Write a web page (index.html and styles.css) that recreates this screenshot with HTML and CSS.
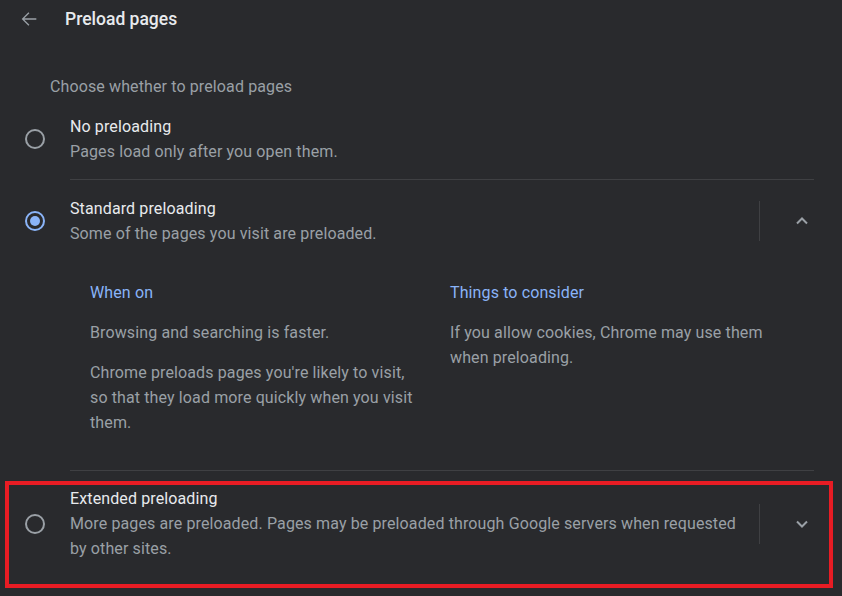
FILE: index.html
```html
<!DOCTYPE html>
<html>
<head>
<meta charset="utf-8">
<link rel="stylesheet" href="styles.css">
</head>
<body>
<div class="page">
  <header class="header">
    <svg class="back" width="22" height="22" viewBox="0 0 24 24"><path d="M20 11.25H6.9l5.55-5.55L11.4 4.65 4.05 12l7.35 7.35 1.05-1.05-5.55-5.55H20z" fill="#9aa0a6"/></svg>
    <h1 class="title">Preload pages</h1>
  </header>
  <div class="intro">Choose whether to preload pages</div>

  <div class="list">
    <div class="row row-first">
      <div class="radio-cell"><span class="radio"></span></div>
      <div class="text">
        <div class="label">No preloading</div>
        <div class="sub">Pages load only after you open them.</div>
      </div>
    </div>
    <div class="sep"></div>
    <div class="row">
      <div class="radio-cell"><span class="radio checked"></span></div>
      <div class="text">
        <div class="label">Standard preloading</div>
        <div class="sub">Some of the pages you visit are preloaded.</div>
      </div>
      <div class="vsep"></div>
      <div class="chev"><svg width="14" height="14" viewBox="0 0 14 14"><path d="M2 9.5 L7 4.5 L12 9.5" fill="none" stroke="#9aa0a6" stroke-width="2"/></svg></div>
    </div>
    <div class="details">
      <div class="col">
        <div class="col-head">When on</div>
        <p>Browsing and searching is faster.</p>
        <p>Chrome preloads pages you're likely to visit, so that they load more quickly when you visit them.</p>
      </div>
      <div class="col">
        <div class="col-head">Things to consider</div>
        <p>If you allow cookies, Chrome may use them when preloading.</p>
      </div>
    </div>
    <div class="sep"></div>
    <div class="row row-last">
      <div class="radio-cell"><span class="radio"></span></div>
      <div class="text">
        <div class="label">Extended preloading</div>
        <div class="sub">More pages are preloaded. Pages may be preloaded through Google servers when requested by other sites.</div>
      </div>
      <div class="vsep"></div>
      <div class="chev"><svg width="14" height="14" viewBox="0 0 14 14"><path d="M2 4.5 L7 9.5 L12 4.5" fill="none" stroke="#9aa0a6" stroke-width="2"/></svg></div>
      <div class="highlight"></div>
    </div>
  </div>
</div>
</body>
</html>
```

FILE: styles.css
```css
html, body {
  margin: 0;
  padding: 0;
  background: #292a2d;
}
body {
  font-family: Roboto, "Liberation Sans", sans-serif;
  font-size: 16px;
  letter-spacing: 0.12px;
  color: #e8eaed;
  width: 842px;
  height: 596px;
  overflow: hidden;
}
.header {
  display: flex;
  align-items: center;
  height: 38px;
  padding-left: 18px;
}
.back {
  display: block;
}
.title {
  margin: 0 0 0 25px;
  font-size: 17.5px;
  font-weight: 500;
  letter-spacing: 0;
  color: #e8eaed;
}
.intro {
  margin-top: 36px;
  padding-left: 50px;
  line-height: 25px;
  color: #9aa0a6;
}
.list {
  padding-right: 28px;
}
.row {
  display: flex;
  align-items: center;
  padding: 16px 0;
  position: relative;
}
.row-first {
  padding-top: 15px;
  padding-bottom: 15px;
}
.row-last {
  padding-top: 15px;
  padding-bottom: 16px;
}
.radio-cell {
  width: 70px;
  display: flex;
  justify-content: center;
  flex: none;
}
.radio {
  width: 16px;
  height: 16px;
  border: 2px solid #9aa0a6;
  border-radius: 50%;
  box-sizing: content-box;
  display: flex;
  align-items: center;
  justify-content: center;
}
.radio.checked {
  border-color: #8ab4f8;
}
.radio.checked::after {
  content: "";
  width: 10px;
  height: 10px;
  border-radius: 50%;
  background: #8ab4f8;
}
.text {
  flex: 1;
  line-height: 25px;
}
.label {
  color: #e8eaed;
}
.sub {
  color: #9aa0a6;
}
.vsep {
  width: 1px;
  height: 40px;
  background: #3f4043;
  margin-left: 20px;
  flex: none;
}
.chev {
  width: 24px;
  height: 24px;
  margin-left: 30px;
  display: flex;
  align-items: center;
  justify-content: center;
  flex: none;
}
.sep {
  height: 1px;
  background: #3f4043;
  margin-left: 70px;
}
.details {
  display: grid;
  grid-template-columns: 330px 340px;
  column-gap: 30px;
  padding: 18px 0 35px 90px;
  line-height: 25px;
}
.col-head {
  color: #8ab4f8;
}
.col p {
  margin: 15px 0 0;
  color: #9aa0a6;
}
.highlight {
  position: absolute;
  left: 5px;
  top: 10px;
  width: 820px;
  height: 99px;
  border: 4px solid #e81c24;
  pointer-events: none;
}
```
